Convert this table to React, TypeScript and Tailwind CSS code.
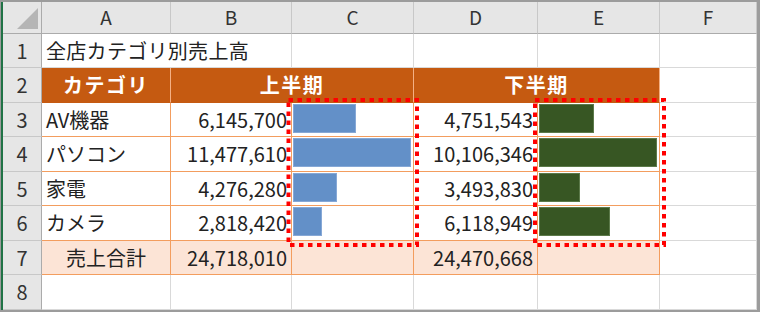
import React from 'react'

const rows = [
  { name: 'AV機器', first: 6145700, second: 4751543 },
  { name: 'パソコン', first: 11477610, second: 10106346 },
  { name: '家電', first: 4276280, second: 3493830 },
  { name: 'カメラ', first: 2818420, second: 6118949 },
]

const maxFirst = Math.max(...rows.map((r) => r.first))
const maxSecond = Math.max(...rows.map((r) => r.second))
const totalFirst = rows.reduce((s, r) => s + r.first, 0)
const totalSecond = rows.reduce((s, r) => s + r.second, 0)

const fmt = (n: number) => n.toLocaleString('en-US')

const colHead =
  'flex items-center justify-center bg-[#e6e6e6] border-r border-b border-r-[#c8c8c8] border-b-[#ababab] text-[19px] text-[#333]'
const rowHead =
  'flex items-center justify-center bg-[#e6e6e6] border-r border-b border-r-[#ababab] border-b-[#c8c8c8] text-[20px] text-[#333]'
const grid = 'border-r border-b border-[#d9d9d9] bg-white'
const tableCell = 'border-r border-b border-[#f39d5e] bg-white'
const totalCell = 'border-r border-b border-[#f39d5e] bg-[#fce4d6]'
const headCell =
  'flex items-center justify-center border-r border-b border-r-[#f4b084] border-b-[#c55a11] bg-[#c55a11] text-white font-semibold text-[20px] tracking-[1.5px]'

function Bar({ value, max, color }: { value: number; max: number; color: 'blue' | 'green' }) {
  return (
    <div className={`${tableCell} flex items-start pt-[1px] pl-[1px]`}>
      <div
        className={
          color === 'blue'
            ? 'h-[29px] bg-[#6390c8] border border-[#86a8d6]'
            : 'h-[29px] bg-[#375623] border border-[#5c7a4a]'
        }
        style={{ width: Math.round((value / max) * 118) }}
      />
    </div>
  )
}

export default function App() {
  return (
    <div className="w-[760px] h-[312px] bg-[#9c9c9c] pt-[2px] pr-[3px] pb-[2px] pl-[1px] font-['Noto_Sans_CJK_JP',sans-serif] text-[#222]">
      <div className="relative h-full border-l-2 border-[#217346] bg-white">
        <div className="grid grid-cols-[39px_129px_121px_122px_124px_122px_97px] grid-rows-[32px_34px_35px_34px_35px_34px_35px_34px_35px]">
          {/* column headers */}
          <div className="relative bg-[#e6e6e6] border-r border-b border-r-[#ababab] border-b-[#ababab]">
            <svg className="absolute left-0 top-0" width="38" height="31" viewBox="0 0 38 31">
              <polygon points="14,27 35,27 35,6" fill="#b5b5b5" />
            </svg>
          </div>
          {['A', 'B', 'C', 'D', 'E', 'F'].map((c) => (
            <div key={c} className={colHead}>
              {c}
            </div>
          ))}

          {/* row 1 */}
          <div className={rowHead}>1</div>
          <div className="relative z-10 flex items-center bg-white border-b border-[#d9d9d9] pl-[4px] text-[20px] tracking-[0.3px] whitespace-nowrap">
            全店カテゴリ別売上高
          </div>
          <div className={grid} />
          <div className={grid} />
          <div className={grid} />
          <div className={grid} />
          <div className={grid} />

          {/* row 2 */}
          <div className={rowHead}>2</div>
          <div className={headCell}>カテゴリ</div>
          <div className={`${headCell} col-span-2`}>上半期</div>
          <div className={`${headCell} col-span-2`}>下半期</div>
          <div className={grid} />

          {/* data rows */}
          {rows.map((r, i) => (
            <React.Fragment key={r.name}>
              <div className={rowHead}>{i + 3}</div>
              <div className={`${tableCell} flex items-center pl-[4px] text-[20px]`}>{r.name}</div>
              <div className={`${tableCell} flex items-center justify-end pr-[4px] text-[20px]`}>
                {fmt(r.first)}
              </div>
              <Bar value={r.first} max={maxFirst} color="blue" />
              <div className={`${tableCell} flex items-center justify-end pr-[4px] text-[20px]`}>
                {fmt(r.second)}
              </div>
              <Bar value={r.second} max={maxSecond} color="green" />
              <div className={grid} />
            </React.Fragment>
          ))}

          {/* total row */}
          <div className={rowHead}>7</div>
          <div className={`${totalCell} flex items-center justify-center text-[20px]`}>売上合計</div>
          <div className={`${totalCell} flex items-center justify-end pr-[4px] text-[20px]`}>
            {fmt(totalFirst)}
          </div>
          <div className={totalCell} />
          <div className={`${totalCell} flex items-center justify-end pr-[4px] text-[20px]`}>
            {fmt(totalSecond)}
          </div>
          <div className={totalCell} />
          <div className={grid} />

          {/* row 8 */}
          <div className={rowHead}>8</div>
          <div className={grid} />
          <div className={grid} />
          <div className={grid} />
          <div className={grid} />
          <div className={grid} />
          <div className={grid} />
        </div>

        {/* red dotted highlight frames */}
        <svg
          className="pointer-events-none absolute left-0 top-0"
          width="754"
          height="308"
          viewBox="0 0 754 308"
        >
          <rect
            x="285.5"
            y="98"
            width="128.5"
            height="145"
            fill="none"
            stroke="#ff0000"
            strokeWidth="4"
            strokeDasharray="4.5 4.5"
          />
          <rect
            x="532"
            y="98"
            width="129"
            height="145"
            fill="none"
            stroke="#ff0000"
            strokeWidth="4"
            strokeDasharray="4.5 4.5"
          />
        </svg>
      </div>
    </div>
  )
}
